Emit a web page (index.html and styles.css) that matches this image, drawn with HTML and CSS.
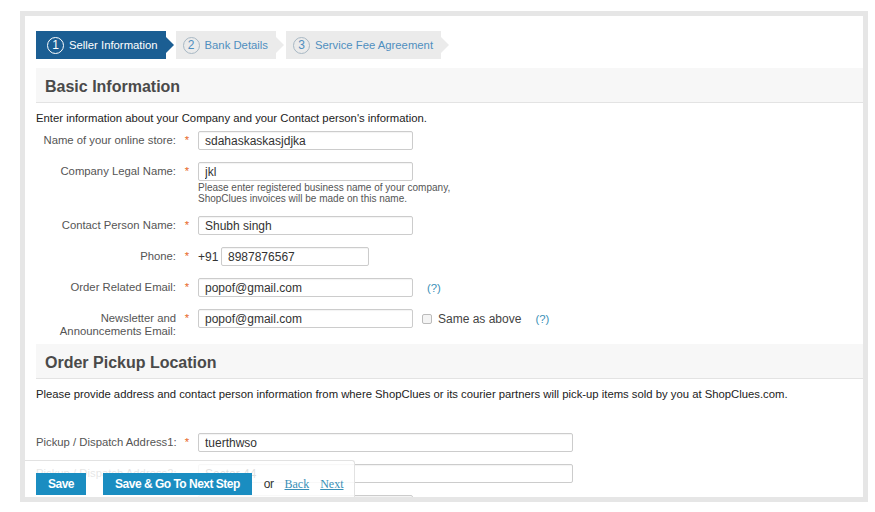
FILE: index.html
```html
<!DOCTYPE html>
<html lang="en">
<head>
  <meta charset="UTF-8" />
  <title>Seller Registration</title>
  <link rel="stylesheet" href="styles.css">
</head>
<body>
  <div class="frame">
    <div class="steps">
      <div class="step active"><span class="num">1</span>Seller Information</div>
      <div class="step"><span class="num">2</span>Bank Details</div>
      <div class="step"><span class="num">3</span>Service Fee Agreement</div>
    </div>

    <div class="section-head">Basic Information</div>
    <div class="intro">Enter information about your Company and your Contact person's information.</div>

    <div class="rows">
      <div class="row">
        <div class="label">Name of your online store:</div>
        <div class="req">*</div>
        <div class="field"><input class="input" type="text" value="sdahaskaskasjdjka"></div>
      </div>
      <div class="row">
        <div class="label">Company Legal Name:</div>
        <div class="req">*</div>
        <div class="field">
          <input class="input" type="text" value="jkl">
          <div class="hint">Please enter registered business name of your company,<br>ShopClues invoices will be made on this name.</div>
        </div>
      </div>
      <div class="row">
        <div class="label">Contact Person Name:</div>
        <div class="req">*</div>
        <div class="field"><input class="input" type="text" value="Shubh singh"></div>
      </div>
      <div class="row">
        <div class="label">Phone:</div>
        <div class="req">*</div>
        <div class="field inline"><span class="prefix">+91</span><input class="input phone" type="text" value="8987876567"></div>
      </div>
      <div class="row">
        <div class="label">Order Related Email:</div>
        <div class="req">*</div>
        <div class="field inline"><input class="input" type="text" value="popof@gmail.com"><span class="help">(?)</span></div>
      </div>
      <div class="row">
        <div class="label">Newsletter and<br>Announcements Email:</div>
        <div class="req">*</div>
        <div class="field inline">
          <input class="input" type="text" value="popof@gmail.com">
          <span class="check"></span><span class="same">Same as above</span><span class="help">(?)</span>
        </div>
      </div>
    </div>

    <div class="section-head second">Order Pickup Location</div>
    <div class="intro">Please provide address and contact person information from where ShopClues or its courier partners will pick-up items sold by you at ShopClues.com.</div>

    <div class="rows address">
      <div class="row">
        <div class="label">Pickup / Dispatch Address1:</div>
        <div class="req">*</div>
        <div class="field"><input class="input wide" type="text" value="tuerthwso"></div>
      </div>
      <div class="row">
        <div class="label">Pickup / Dispatch Address2:</div>
        <div class="req"></div>
        <div class="field"><input class="input wide" type="text" value="Sector 44"></div>
      </div>
      <div class="row">
        <div class="label"></div>
        <div class="req"></div>
        <div class="field"><input class="input" type="text" value=""></div>
      </div>
    </div>

    <div class="action-bar">
      <button class="btn">Save</button>
      <button class="btn next">Save &amp; Go To Next Step</button>
      <span class="or">or</span>
      <a class="link" href="#">Back</a>
      <a class="link" href="#">Next</a>
    </div>
  </div>
</body>
</html>
```

FILE: styles.css
```css
body {
  margin: 0;
  background: #ffffff;
  font-family: 'Liberation Sans', Arial, sans-serif;
  font-size: 11.3px;
  color: #333333;
}
.frame {
  box-sizing: border-box;
  position: relative;
  overflow: hidden;
  margin: 11px 0 0 20px;
  width: 848px;
  height: 491px;
  border: 5px solid #e6e6e6;
  padding: 15px 0 0 11px;
  background: #ffffff;
}

/* steps */
.steps {
  display: flex;
  gap: 10px;
  height: 28px;
}
.step {
  position: relative;
  display: flex;
  align-items: center;
  padding: 0 8px 0 7px;
  background: #ebebeb;
  color: #4f8fbf;
  white-space: nowrap;
}
.step::after {
  content: '';
  position: absolute;
  right: -8px;
  top: 6px;
  border-left: 8px solid #ebebeb;
  border-top: 8px solid transparent;
  border-bottom: 8px solid transparent;
}
.step.active {
  background: #1b5e93;
  color: #ffffff;
  padding-left: 11px;
}
.step.active::after {
  border-left-color: #1b5e93;
}
.num {
  display: inline-block;
  box-sizing: border-box;
  width: 17px;
  height: 17px;
  margin-right: 5px;
  border: 1px solid #a8b8c4;
  border-radius: 50%;
  text-align: center;
  line-height: 15px;
  font-size: 12px;
}
.step.active .num {
  border-color: #ffffff;
}

/* sections */
.section-head {
  margin-top: 9px;
  height: 34px;
  line-height: 37px;
  padding-left: 9px;
  background: #f7f7f7;
  border-bottom: 1px solid #e3e3e3;
  font-size: 16px;
  font-weight: bold;
  color: #4a4a4a;
}
.section-head.second {
  margin-top: 6px;
}
.intro {
  margin-top: 8px;
  line-height: 14px;
  color: #222222;
  white-space: nowrap;
}

/* form rows */
.rows {
  margin-top: 6px;
}
.rows.address {
  margin-top: 32px;
}
.row {
  display: flex;
  align-items: flex-start;
  margin-bottom: 12px;
}
.row:last-child {
  margin-bottom: 0;
}
.label {
  width: 140px;
  padding-top: 3px;
  line-height: 13px;
  text-align: right;
  color: #555555;
  white-space: nowrap;
}
.req {
  width: 22px;
  padding-top: 3px;
  line-height: 13px;
  text-align: center;
  color: #e8692a;
}
.field.inline {
  display: flex;
  align-items: center;
}
.input {
  box-sizing: border-box;
  width: 215px;
  height: 19px;
  margin: 0;
  padding: 0 6px;
  border: 1px solid #cccccc;
  border-radius: 2px;
  box-shadow: inset 0 1px 1px rgba(0,0,0,0.05);
  font-family: 'Liberation Sans', Arial, sans-serif;
  font-size: 12px;
  color: #333333;
  outline: none;
}
.input.phone {
  width: 148px;
}
.input.wide {
  width: 375px;
}
.prefix {
  width: 23px;
  font-size: 12px;
  color: #333333;
}
.hint {
  padding-top: 1px;
  font-size: 10px;
  line-height: 11px;
  color: #555555;
  white-space: nowrap;
}
.help {
  margin-left: 14px;
  color: #3a8fb7;
}
.check {
  box-sizing: border-box;
  width: 10px;
  height: 10px;
  margin-left: 9px;
  border: 1px solid #bbbbbb;
  border-radius: 2px;
  background: #f4f4f4;
}
.same {
  margin-left: 6px;
  font-size: 12px;
  color: #444444;
}

/* bottom action bar */
.action-bar {
  position: absolute;
  left: -1px;
  bottom: 0;
  box-sizing: border-box;
  width: 331px;
  height: 37px;
  padding: 12px 0 0 12px;
  display: flex;
  align-items: flex-start;
  background: rgba(255,255,255,0.85);
  border-top: 1px solid #e2e2e2;
  border-right: 1px solid #e2e2e2;
  border-top-right-radius: 3px;
}
.btn {
  height: 22px;
  padding: 0 12px;
  border: none;
  background: #1a8dc1;
  color: #ffffff;
  font-family: 'Liberation Sans', Arial, sans-serif;
  font-size: 12px;
  font-weight: bold;
  letter-spacing: -0.5px;
  white-space: nowrap;
}
.btn.next {
  margin-left: 17px;
  padding: 0 12px;
}
.or {
  margin-left: 12px;
  line-height: 22px;
  font-size: 12px;
  letter-spacing: -0.5px;
  color: #333333;
}
.link {
  margin-left: 11px;
  line-height: 22px;
  font-family: 'Liberation Serif', 'Times New Roman', serif;
  font-size: 12px;
  color: #3a8fb7;
}
```
